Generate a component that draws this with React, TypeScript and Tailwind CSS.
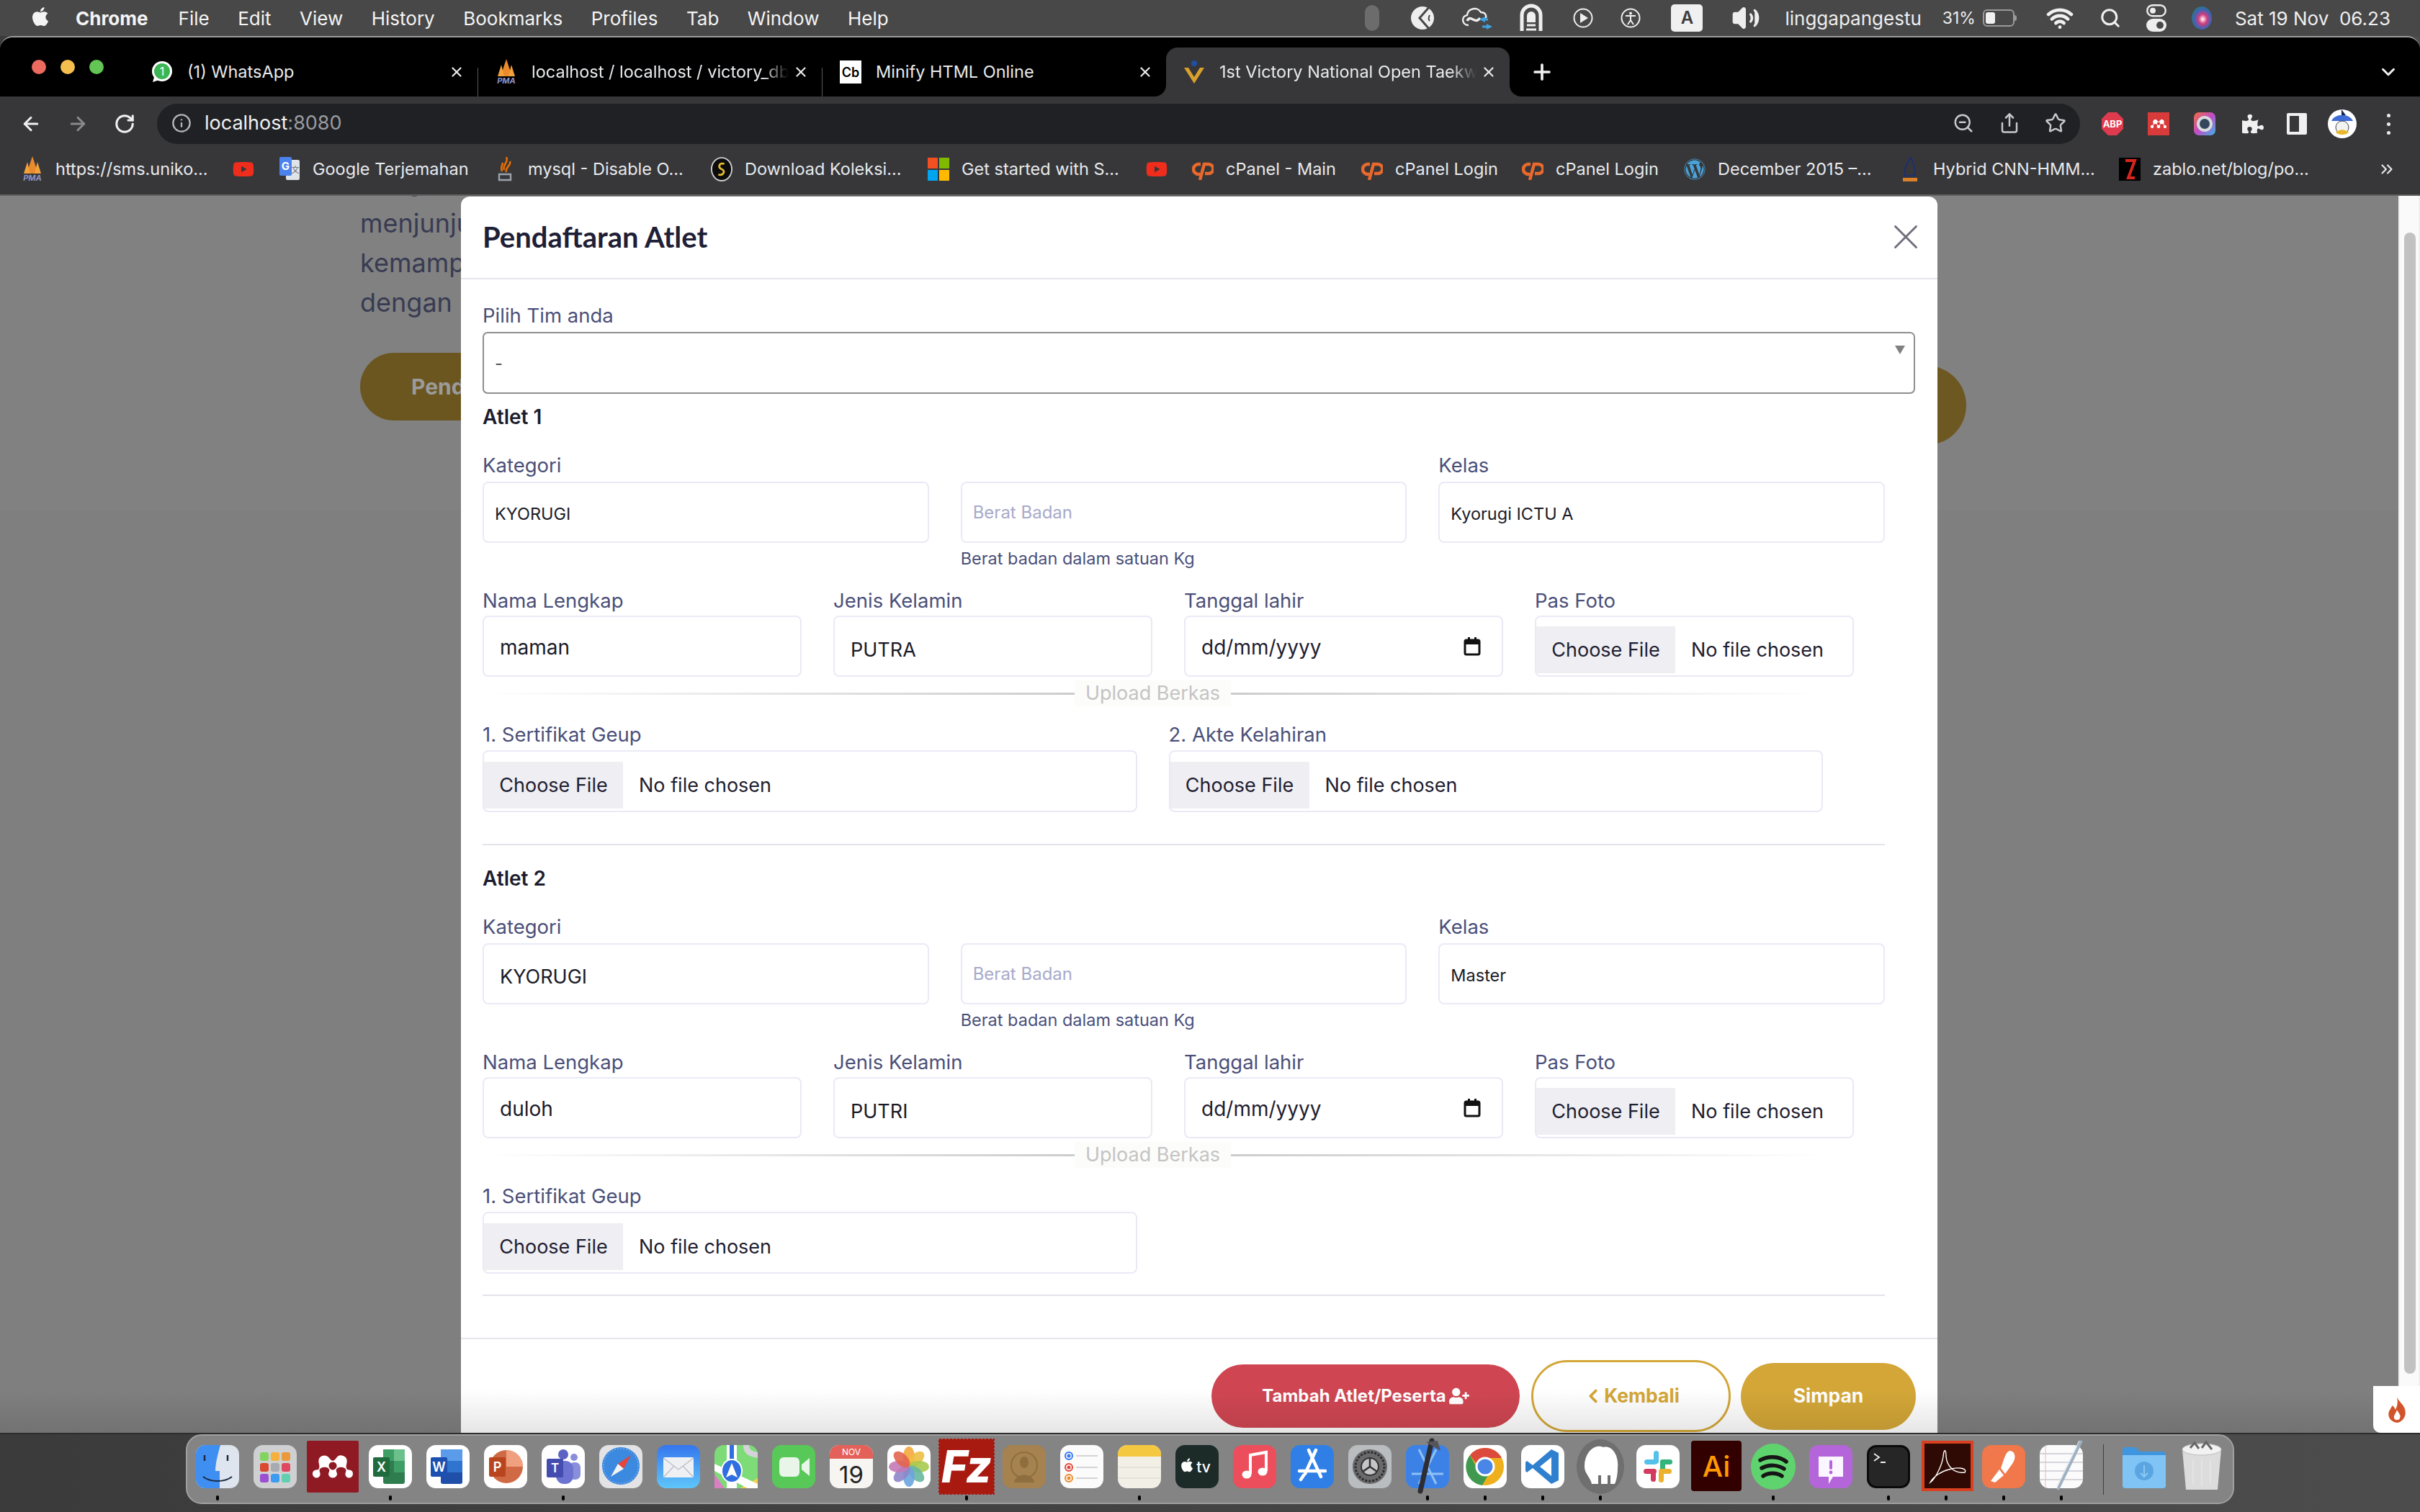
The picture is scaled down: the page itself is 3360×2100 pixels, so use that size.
import React from 'react';
import {
  ArrowLeft, ArrowRight, RotateCw, Info, ZoomOut, Share, Star, X, Plus, ChevronDown, ChevronLeft,
  Search, Wifi, Volume2, ChevronsRight,
} from 'lucide-react';
import { FaApple, FaUserPlus, FaPuzzlePiece, FaYoutube, FaWordpress } from 'react-icons/fa';
import { SiMendeley } from 'react-icons/si';

const menuItems = ['File', 'Edit', 'View', 'History', 'Bookmarks', 'Profiles', 'Tab', 'Window', 'Help'];

function PmaIcon() {
  return (
    <svg width="32" height="36" viewBox="0 0 30 36">
      <path d="M15 0 L23 24 H7 Z" fill="#e98a2c" />
      <path d="M8 8 L3 24 H12 Z" fill="#f3a23b" />
      <path d="M22 8 L27 24 H18 Z" fill="#f3a23b" />
      <text x="15" y="34" textAnchor="middle" fontSize="11" fontStyle="italic" fontWeight="700" fill="#8d93c9" fontFamily="Inter, sans-serif">PMA</text>
    </svg>
  );
}

function VictoryIcon() {
  return (
    <svg width="30" height="34" viewBox="0 0 30 34">
      <circle cx="15" cy="5" r="4" fill="#1f4fa3" />
      <path d="M1 11 L15 33 L29 11 L23 11 L15 24 L7 11 Z" fill="#d9a12c" />
    </svg>
  );
}

function Tab({ icon, title, active, fade }: { icon: React.ReactNode; title: string; active?: boolean; fade?: boolean }) {
  return (
    <div className={`relative flex h-[68px] w-[477px] shrink-0 items-center gap-[20px] pl-[24px] pr-[18px] ${active ? 'rounded-t-[16px] bg-[#37373a]' : ''}`}>
      {active && (
        <>
          <div className="absolute bottom-0 left-[-16px] h-[16px] w-[16px] bg-[#37373a]">
            <div className="h-full w-full rounded-br-[16px] bg-black" />
          </div>
          <div className="absolute bottom-0 right-[-16px] h-[16px] w-[16px] bg-[#37373a]">
            <div className="h-full w-full rounded-bl-[16px] bg-black" />
          </div>
        </>
      )}
      <div className="flex w-[30px] shrink-0 justify-center">{icon}</div>
      <div className={`min-w-0 flex-1 overflow-hidden whitespace-nowrap text-[23.5px] text-[#e8eaed] ${fade ? '[mask-image:linear-gradient(to_right,black_90%,transparent)]' : ''}`}>
        {title}
      </div>
      <X size={22} strokeWidth={2.4} className="ml-[-14px] shrink-0 text-[#e8eaed]" />
    </div>
  );
}

function TabSep() {
  return <div className="mt-[15px] h-[40px] w-[1px] shrink-0 bg-[#5a5a5e]" />;
}

function YtIcon() {
  return <FaYoutube size={32} className="text-[#ee2d1d]" />;
}

function CpIcon() {
  return (
    <svg width="30" height="30" viewBox="0 0 30 30">
      <path d="M12 8 H9 A7 7 0 0 0 9 22 H11" fill="none" stroke="#e9692c" strokeWidth="4.5" />
      <path d="M11 30 L17 8 H23 A6.5 6.5 0 0 1 23 21 H18" fill="none" stroke="#e9692c" strokeWidth="4.5" />
    </svg>
  );
}

const bookmarks: { icon: React.ReactNode; label?: string; w?: string }[] = [
  { icon: <PmaIcon />, label: 'https://sms.uniko...', w: 'w-[212px]' },
  { icon: <YtIcon /> },
  {
    icon: (
      <svg width="30" height="34" viewBox="0 0 30 34">
        <rect x="10" y="4" width="19" height="28" rx="2" fill="#dfe3ea" />
        <rect x="1" y="0" width="17" height="26" rx="2" fill="#4a82ee" />
        <text x="9.5" y="18" textAnchor="middle" fontSize="15" fontWeight="700" fill="#fff" fontFamily="Inter, sans-serif">G</text>
        <text x="23" y="22" textAnchor="middle" fontSize="11" fill="#666" fontFamily="Noto Sans CJK SC, sans-serif">文</text>
      </svg>
    ),
    label: 'Google Terjemahan',
    w: 'w-[218px]',
  },
  {
    icon: (
      <svg width="24" height="34" viewBox="0 0 24 34">
        <path d="M14 0 C18 8 8 10 11 18 M19 6 C21 12 12 14 14 21 M9 8 C8 13 6 14 8 20" fill="none" stroke="#e76f00" strokeWidth="2.6" />
        <path d="M4 24 H20 V32 H4 Z" fill="none" stroke="#9aa3ad" strokeWidth="2.4" />
      </svg>
    ),
    label: 'mysql - Disable O...',
    w: 'w-[220px]',
  },
  {
    icon: (
      <svg width="32" height="36" viewBox="0 0 32 36">
        <ellipse cx="16" cy="18" rx="15" ry="17" fill="#0c0c0c" stroke="#cfcfcf" strokeWidth="2" />
        <path d="M20 10 C12 8 10 15 16 18 C22 20 19 28 11 26" fill="none" stroke="#e5bb2f" strokeWidth="3" />
      </svg>
    ),
    label: 'Download Koleksi...',
    w: 'w-[220px]',
  },
  {
    icon: (
      <svg width="30" height="32" viewBox="0 0 30 32">
        <rect width="14" height="15" fill="#f25022" />
        <rect x="16" width="14" height="15" fill="#7fba00" />
        <rect y="17" width="14" height="15" fill="#00a4ef" />
        <rect x="16" y="17" width="14" height="15" fill="#ffb900" />
      </svg>
    ),
    label: 'Get started with S...',
    w: 'w-[222px]',
  },
  { icon: <YtIcon /> },
  { icon: <CpIcon />, label: 'cPanel - Main', w: 'w-[154px]' },
  { icon: <CpIcon />, label: 'cPanel Login', w: 'w-[142px]' },
  { icon: <CpIcon />, label: 'cPanel Login', w: 'w-[144px]' },
  { icon: <FaWordpress size={32} className="text-[#4aa3d8]" />, label: 'December 2015 –...', w: 'w-[218px]' },
  {
    icon: (
      <svg width="30" height="34" viewBox="0 0 30 34">
        <path d="M8 26 C6 14 12 8 16 0 C20 8 22 18 22 26 Z" fill="none" stroke="#1d2f6f" strokeWidth="2" />
        <rect x="5" y="29" width="20" height="5" fill="#d9822b" />
      </svg>
    ),
    label: 'Hybrid CNN-HMM...',
    w: 'w-[224px]',
  },
  {
    icon: (
      <svg width="30" height="32" viewBox="0 0 30 32">
        <rect width="30" height="32" fill="#000" />
        <path d="M9 4 H22 L13 28 H22" fill="none" stroke="#d8261c" strokeWidth="4" />
      </svg>
    ),
    label: 'zablo.net/blog/po...',
    w: 'w-[215px]',
  },
];

function Label({ children }: { children: React.ReactNode }) {
  return <div className="h-[36px] text-[27.5px] leading-[36px] text-[#4b5079]">{children}</div>;
}

function Field({ children, h, extra }: { children?: React.ReactNode; h: string; extra?: string }) {
  return (
    <div className={`flex items-center rounded-[8px] border-2 border-[#e9eaf6] bg-white ${h} ${extra ?? ''}`}>
      {children}
    </div>
  );
}

function FileField({ h }: { h: string }) {
  return (
    <div className={`flex items-end rounded-[8px] border-2 border-[#e9eaf6] bg-white pb-[3px] ${h}`}>
      <div className="flex h-[65px] w-[193px] shrink-0 items-center justify-center bg-[#eeeef3] pt-[2px] text-[27px] text-[#1f2030]">Choose File</div>
      <div className="flex h-[65px] items-center pl-[22px] pt-[2px] text-[27px] text-[#1f2030]">No file chosen</div>
    </div>
  );
}

function UploadDivider() {
  return (
    <div className="flex h-[36px] w-[1861px] items-center">
      <div className="h-[3px] flex-1 bg-gradient-to-r from-white to-[#cccccc]" />
      <div className="bg-[#fcfcfa] px-[15px] text-[27px] leading-[36px] text-[#c4c4c4]">Upload Berkas</div>
      <div className="h-[3px] flex-1 bg-gradient-to-r from-[#cccccc] to-white" />
    </div>
  );
}

function DateField() {
  return (
    <Field h="h-[85px]" extra="justify-between pl-[22px] pr-[29px]">
      <span className="pt-[2px] text-[28px] text-[#1f2030]">dd/mm/yyyy</span>
      <svg width="24" height="26" viewBox="0 0 24 26">
        <rect x="2" y="4" width="20" height="20" rx="2" fill="none" stroke="#111" strokeWidth="3" />
        <rect x="2" y="4" width="20" height="6" fill="#111" />
        <rect x="6" y="0" width="3" height="5" fill="#111" />
        <rect x="15" y="0" width="3" height="5" fill="#111" />
      </svg>
    </Field>
  );
}

function Athlete(p: {
  title: string; kategoriClass: string; kelas: string; nama: string; gender: string;
  second?: boolean; closeGap: string;
}) {
  return (
    <div>
      <div className="h-[36px] text-[28px] font-semibold leading-[36px] text-[#1c1d2e]">{p.title}</div>

      <div className="mt-[31px] grid w-[1947px] grid-cols-3 gap-x-[44px]">
        <div>
          <Label>Kategori</Label>
          <div className="mt-[5px]">
            <Field h="h-[85px]" extra={p.kategoriClass}>KYORUGI</Field>
          </div>
        </div>
        <div>
          <div className="h-[41px]" />
          <Field h="h-[85px]" extra="pl-[15px] text-[24px] text-[#a8aac9]">Berat Badan</Field>
          <div className="mt-[7px] h-[30px] text-[23.5px] leading-[30px] text-[#4b5079]">Berat badan dalam satuan Kg</div>
        </div>
        <div>
          <Label>Kelas</Label>
          <div className="mt-[5px]">
            <Field h="h-[85px]" extra="pl-[15px] pt-[4px] text-[23.5px] text-[#1a1b28]">{p.kelas}</Field>
          </div>
        </div>
      </div>

      <div className="mt-[25px] grid w-[1904px] grid-cols-4 gap-x-[44px]">
        <div>
          <Label>Nama Lengkap</Label>
          <div className="mt-[3px]">
            <Field h="h-[85px]" extra="pl-[22px] pt-[2px] text-[28px] text-[#1a1b28]">{p.nama}</Field>
          </div>
        </div>
        <div>
          <Label>Jenis Kelamin</Label>
          <div className="mt-[3px]">
            <Field h="h-[85px]" extra="pl-[22px] pt-[11px] text-[27px] text-[#1a1b28]">{p.gender}</Field>
          </div>
        </div>
        <div>
          <Label>Tanggal lahir</Label>
          <div className="mt-[3px]">
            <DateField />
          </div>
        </div>
        <div>
          <Label>Pas Foto</Label>
          <div className="mt-[3px]">
            <FileField h="h-[85px]" />
          </div>
        </div>
      </div>

      <div className="mt-[5px]">
        <UploadDivider />
      </div>

      <div className="mt-[21px] grid w-[1861px] grid-cols-2 gap-x-[44px]">
        <div>
          <Label>1. Sertifikat Geup</Label>
          <div className="mt-[4px]">
            <FileField h="h-[86px]" />
          </div>
        </div>
        {!p.second && (
          <div>
            <Label>2. Akte Kelahiran</Label>
            <div className="mt-[4px]">
              <FileField h="h-[86px]" />
            </div>
          </div>
        )}
      </div>

      <div className={`${p.closeGap} h-[2px] w-[1947px] bg-[#e3e3ea]`} />
    </div>
  );
}

function Tile({ bg, children }: { bg: string; children?: React.ReactNode }) {
  return (
    <>
      <rect width="60" height="60" rx="13" fill={bg} />
      {children}
    </>
  );
}

const dockIcons: { name: string; dot?: boolean; art: React.ReactNode }[] = [
  {
    name: 'finder',
    dot: true,
    art: (
      <>
        <rect width="60" height="60" rx="13" fill="#dfe5ee" />
        <path d="M13 0 H34 C30 14 27 26 27 36 H33 V60 H13 A13 13 0 0 1 0 47 V13 A13 13 0 0 1 13 0 Z" fill="#3f8ef2" />
        <path d="M12 14 V22 M44 14 V22" stroke="#1b2a44" strokeWidth="2.5" />
        <path d="M10 44 C20 52 40 52 50 44" fill="none" stroke="#1b2a44" strokeWidth="2" />
      </>
    ),
  },
  {
    name: 'launchpad',
    art: (
      <Tile bg="#cfd0d2">
        <rect x="9" y="10" width="12" height="12" rx="3" fill="#82d35f" />
        <rect x="24" y="10" width="12" height="12" rx="3" fill="#f5b13c" />
        <rect x="39" y="10" width="12" height="12" rx="3" fill="#ea9a3c" />
        <rect x="9" y="25" width="12" height="12" rx="3" fill="#d9492f" />
        <rect x="24" y="25" width="12" height="12" rx="3" fill="#a7abb0" />
        <rect x="39" y="25" width="12" height="12" rx="3" fill="#e0485f" />
        <rect x="9" y="40" width="12" height="12" rx="3" fill="#9b4fd1" />
        <rect x="24" y="40" width="12" height="12" rx="3" fill="#3b9cf0" />
        <rect x="39" y="40" width="12" height="12" rx="3" fill="#62d0b0" />
      </Tile>
    ),
  },
  {
    name: 'mendeley',
    art: (
      <>
        <rect x="-6" y="-6" width="72" height="72" rx="2" fill="#8f1a24" />
        <SiMendeley x={2} y={2} size={56} color="#ffffff" />
      </>
    ),
  },
  {
    name: 'excel',
    dot: true,
    art: (
      <Tile bg="#ffffff">
        <rect x="20" y="6" width="30" height="48" rx="3" fill="#2f7d4f" />
        <rect x="35" y="6" width="15" height="16" fill="#6cc08c" />
        <rect x="20" y="6" width="15" height="16" fill="#3f9e66" />
        <rect x="35" y="22" width="15" height="16" fill="#3f9e66" />
        <rect x="6" y="17" width="23" height="27" rx="2" fill="#1f6b3d" />
        <text x="17.5" y="37" textAnchor="middle" fontSize="18" fontWeight="600" fill="#fff" fontFamily="Inter, sans-serif">X</text>
      </Tile>
    ),
  },
  {
    name: 'word',
    art: (
      <Tile bg="#ffffff">
        <rect x="20" y="6" width="30" height="48" rx="3" fill="#1f4fa8" />
        <rect x="20" y="6" width="30" height="16" fill="#5a9bea" />
        <rect x="20" y="22" width="30" height="16" fill="#2f74cf" />
        <rect x="6" y="17" width="23" height="27" rx="2" fill="#1d4fb0" />
        <text x="17.5" y="37" textAnchor="middle" fontSize="18" fontWeight="600" fill="#fff" fontFamily="Inter, sans-serif">W</text>
      </Tile>
    ),
  },
  {
    name: 'ppt',
    art: (
      <Tile bg="#ffffff">
        <circle cx="31" cy="30" r="23" fill="#cf6a45" />
        <path d="M31 7 A23 23 0 0 1 54 30 H31 Z" fill="#f0a07f" />
        <rect x="7" y="17" width="23" height="27" rx="2" fill="#b9451f" />
        <text x="18.5" y="37" textAnchor="middle" fontSize="18" fontWeight="600" fill="#fff" fontFamily="Inter, sans-serif">P</text>
      </Tile>
    ),
  },
  {
    name: 'teams',
    dot: true,
    art: (
      <Tile bg="#ffffff">
        <circle cx="30" cy="13" r="7" fill="#5c63c4" />
        <circle cx="45" cy="17" r="5" fill="#8a8fdc" />
        <rect x="38" y="24" width="16" height="24" rx="7" fill="#8a8fdc" />
        <rect x="20" y="22" width="24" height="32" rx="11" fill="#6c73d0" />
        <rect x="7" y="19" width="23" height="26" rx="2" fill="#444cb0" />
        <text x="18.5" y="38" textAnchor="middle" fontSize="17" fontWeight="600" fill="#fff" fontFamily="Inter, sans-serif">T</text>
      </Tile>
    ),
  },
  {
    name: 'safari',
    art: (
      <Tile bg="#e3e3e5">
        <circle cx="30" cy="29" r="26" fill="#3c89e0" />
        <circle cx="30" cy="29" r="24" fill="none" stroke="#d9e9fb" strokeWidth="1" strokeDasharray="1 3" />
        <path d="M44 14 L26 26 L34 33 Z" fill="#e8443a" />
        <path d="M16 44 L26 26 L34 33 Z" fill="#f3f3f3" />
      </Tile>
    ),
  },
  {
    name: 'mail',
    art: (
      <>
        <defs>
          <linearGradient id="mailbg" x1="0" y1="0" x2="0" y2="1">
            <stop offset="0" stopColor="#3576ee" />
            <stop offset="1" stopColor="#5fc6fa" />
          </linearGradient>
        </defs>
        <Tile bg="url(#mailbg)">
          <rect x="9" y="17" width="42" height="28" rx="2" fill="#eef0f3" />
          <path d="M9 18 L30 34 L51 18 M9 45 L24 29 M51 45 L36 29" fill="none" stroke="#b8bcc4" strokeWidth="1.2" />
        </Tile>
      </>
    ),
  },
  {
    name: 'maps',
    art: (
      <Tile bg="#7ddb78">
        <path d="M0 40 L14 60 H0 Z" fill="#d97fc2" />
        <path d="M36 60 L60 46 V60 Z" fill="#f6d24c" />
        <path d="M40 0 C40 14 50 16 60 18 V10 C52 9 48 6 48 0 Z" fill="#d4d4d8" />
        <path d="M0 26 L60 54 V60 H46 L0 36 Z" fill="#ffffff" />
        <rect x="17" y="0" width="14" height="60" fill="#ffffff" />
        <rect x="21" y="0" width="6" height="30" fill="#2f6fe0" />
        <ellipse cx="24" cy="36" rx="14" ry="16" fill="#2f6fe0" stroke="#fff" strokeWidth="2" />
        <path d="M24 25 L32 45 L24 41 L16 45 Z" fill="#fff" />
      </Tile>
    ),
  },
  {
    name: 'facetime',
    art: (
      <Tile bg="#58c958">
        <rect x="10" y="17" width="28" height="27" rx="6" fill="#e8f5e8" />
        <path d="M41 27 L52 18 V43 L41 34 Z" fill="#e8f5e8" />
      </Tile>
    ),
  },
  {
    name: 'calendar',
    art: (
      <Tile bg="#f6f5f2">
        <path d="M13 0 H47 A13 13 0 0 1 60 13 V19 H0 V13 A13 13 0 0 1 13 0 Z" fill="#e4615a" />
        <text x="30" y="14" textAnchor="middle" fontSize="12" fill="#fff" fontFamily="Inter, sans-serif">NOV</text>
        <text x="30" y="53" textAnchor="middle" fontSize="33" fill="#222" fontFamily="Inter, sans-serif">19</text>
      </Tile>
    ),
  },
  {
    name: 'photos',
    art: (
      <Tile bg="#ffffff">
        {[
          ['#f5a83c', 0], ['#ecc043', 45], ['#a8c94f', 90], ['#69b8a0', 135],
          ['#6ba4de', 180], ['#8d86c9', 225], ['#c47ab6', 270], ['#e2654f', 315],
        ].map(([c, r]) => (
          <ellipse key={String(r)} cx="30" cy="16" rx="8" ry="14" fill={String(c)} opacity="0.9" transform={`rotate(${r} 30 30)`} />
        ))}
      </Tile>
    ),
  },
  {
    name: 'filezilla',
    dot: true,
    art: (
      <>
        <rect x="-8" y="-8" width="76" height="76" fill="#a81a10" stroke="#a81a10" strokeWidth="2" strokeDasharray="3 2" />
        <text x="30" y="52" textAnchor="middle" fontSize="62" fontWeight="800" fontStyle="italic" fill="#fff" fontFamily="Inter, sans-serif">Fz</text>
      </>
    ),
  },
  {
    name: 'contacts',
    art: (
      <Tile bg="#a5824f">
        <circle cx="30" cy="28" r="18" fill="none" stroke="#8e6e3f" strokeWidth="2" />
        <ellipse cx="30" cy="24" rx="6" ry="8" fill="#8e6e3f" />
        <path d="M16 52 C18 38 42 38 44 52 Z" fill="#8e6e3f" />
      </Tile>
    ),
  },
  {
    name: 'reminders',
    art: (
      <Tile bg="#fbfbfb">
        <circle cx="12" cy="15" r="5" fill="none" stroke="#3478f6" strokeWidth="2" />
        <circle cx="12" cy="15" r="2.5" fill="#3478f6" />
        <circle cx="12" cy="31" r="5" fill="none" stroke="#e2483c" strokeWidth="2" />
        <circle cx="12" cy="31" r="2.5" fill="#e2483c" />
        <circle cx="12" cy="46" r="5" fill="none" stroke="#ee8a2b" strokeWidth="2" />
        <circle cx="12" cy="46" r="2.5" fill="#ee8a2b" />
        <path d="M22 15 H52 M22 31 H52 M22 46 H52" stroke="#c8c8cc" strokeWidth="1.6" />
      </Tile>
    ),
  },
  {
    name: 'notes',
    dot: true,
    art: (
      <Tile bg="#f1efe6">
        <path d="M13 0 H47 A13 13 0 0 1 60 13 V16 H0 V13 A13 13 0 0 1 13 0 Z" fill="#f5c842" />
        <path d="M0 31 H60 M0 46 H60" stroke="#d9d7cd" strokeWidth="1" />
      </Tile>
    ),
  },
  {
    name: 'tv',
    art: (
      <Tile bg="#1c2a28">
        <g transform="translate(8 17) scale(0.042)" fill="#fff">
          <path d="M318.7 268.7c-.2-36.7 16.4-64.4 50-84.8-18.8-26.9-47.2-41.7-84.7-44.6-35.5-2.8-74.3 20.7-88.5 20.7-15 0-49.4-19.7-76.4-19.7C63.3 141.2 4 184.8 4 273.5q0 39.3 14.4 81.2c12.8 36.7 59 126.7 107.2 125.2 25.2-.6 43-17.9 75.8-17.9 31.8 0 48.3 17.9 76.4 17.9 48.6-.7 90.4-82.5 102.6-119.3-65.2-30.7-61.7-90-61.7-91.9zm-56.6-164.2c27.3-32.4 24.8-61.9 24-72.5-24.1 1.4-52 16.4-67.9 34.9-17.5 19.8-27.8 44.3-25.6 71.9 26.1 2 49.9-11.4 69.5-34.3z" />
        </g>
        <text x="39" y="38" textAnchor="middle" fontSize="21" fontWeight="500" fill="#fff" fontFamily="Inter, sans-serif">tv</text>
      </Tile>
    ),
  },
  {
    name: 'music',
    art: (
      <Tile bg="#ec4e5c">
        <path d="M24 40 V14 L46 10 V36" fill="none" stroke="#fff" strokeWidth="4" />
        <ellipse cx="19" cy="41" rx="6.5" ry="5.5" fill="#fff" />
        <ellipse cx="41" cy="37" rx="6.5" ry="5.5" fill="#fff" />
      </Tile>
    ),
  },
  {
    name: 'appstore',
    art: (
      <Tile bg="#2f7fe6">
        <path d="M35 7 L20 40 M25 7 L42 44 M12 36 H48 M14 48 L18 42" fill="none" stroke="#fff" strokeWidth="4.5" strokeLinecap="round" />
      </Tile>
    ),
  },
  {
    name: 'settings',
    art: (
      <Tile bg="#b9bdbf">
        <circle cx="30" cy="30" r="24" fill="#6a6a6c" />
        <circle cx="30" cy="30" r="20" fill="none" stroke="#2d2d2f" strokeWidth="3" strokeDasharray="3 2" />
        <circle cx="30" cy="30" r="12" fill="#c5c5c7" stroke="#333" strokeWidth="2" />
        <path d="M30 18 V30 L20 37 M30 30 L40 37" stroke="#333" strokeWidth="2.5" fill="none" />
      </Tile>
    ),
  },
  {
    name: 'xcode',
    dot: true,
    art: (
      <>
        <Tile bg="#3c82e6">
          <path d="M18 6 L42 54 M42 6 L18 54 M8 40 H52" stroke="#8fc0f5" strokeWidth="3" fill="none" />
        </Tile>
        <path d="M36 -6 L20 64" stroke="#2d2d33" strokeWidth="7" strokeLinecap="round" />
        <path d="M28 -4 L44 -6 L48 8 L38 2 Z" fill="#55555c" />
      </>
    ),
  },
  {
    name: 'chrome',
    dot: true,
    art: (
      <Tile bg="#ffffff">
        <circle cx="30" cy="30" r="26" fill="#eeb11d" />
        <path d="M30 4 A26 26 0 0 1 53 18 H30 A12 12 0 0 0 18 26 L9 14 A26 26 0 0 1 30 4 Z" fill="#db4a3b" />
        <path d="M9 14 L22 38 A13 13 0 0 0 34 42 L26 56 A26 26 0 0 1 9 14 Z" fill="#3f9a4f" />
        <circle cx="30" cy="30" r="12" fill="#4a86e8" stroke="#fff" strokeWidth="3" />
      </Tile>
    ),
  },
  {
    name: 'vscode',
    dot: true,
    art: (
      <Tile bg="#ffffff">
        <path d="M42 6 L52 11 V49 L42 54 L16 32 L8 38 L6 36 V24 L8 22 L16 28 Z" fill="#2f80cf" />
        <path d="M42 17 V43 L26 30 Z" fill="#ffffff" />
      </Tile>
    ),
  },
  {
    name: 'elephant',
    dot: true,
    art: (
      <>
        <ellipse cx="30" cy="30" rx="33" ry="38" fill="#6f6f6f" />
        <path d="M8 30 C8 10 22 -2 34 3 C46 0 56 14 54 32 C54 42 52 50 50 54 H44 V42 H40 V54 H31 V42 H27 V54 H18 C16 44 8 40 8 30 Z" fill="#ffffff" />
      </>
    ),
  },
  {
    name: 'slack',
    art: (
      <Tile bg="#ffffff">
        <rect x="24" y="8" width="7" height="18" rx="3.5" fill="#54c1e9" />
        <rect x="11" y="20" width="18" height="7" rx="3.5" fill="#54c1e9" />
        <rect x="33" y="20" width="7" height="18" rx="3.5" fill="#32b47a" />
        <rect x="33" y="20" width="17" height="7" rx="3.5" fill="#32b47a" />
        <rect x="31" y="33" width="18" height="7" rx="3.5" fill="#ecb22e" />
        <rect x="31" y="35" width="7" height="17" rx="3.5" fill="#ecb22e" />
        <rect x="20" y="33" width="7" height="18" rx="3.5" fill="#d23a60" />
        <rect x="10" y="33" width="18" height="7" rx="3.5" fill="#d23a60" />
      </Tile>
    ),
  },
  {
    name: 'illustrator',
    art: (
      <>
        <rect x="-4" y="-6" width="70" height="70" rx="4" fill="#330000" />
        <text x="31" y="44" textAnchor="middle" fontSize="40" fontWeight="500" fill="#ff9a00" fontFamily="Inter, sans-serif">Ai</text>
      </>
    ),
  },
  {
    name: 'spotify',
    dot: true,
    art: (
      <>
        <ellipse cx="30" cy="30" rx="31" ry="32" fill="#5fd46e" />
        <path d="M12 21 C22 15 38 15 48 23 M14 32 C24 27 36 27 45 33 M16 43 C24 38 34 38 42 43" fill="none" stroke="#161616" strokeWidth="5.5" strokeLinecap="round" />
      </>
    ),
  },
  {
    name: 'feedback',
    art: (
      <Tile bg="#b465da">
        <path d="M13 16 H47 V44 H33 L27 54 V44 H13 Z" fill="#fbf6ff" />
        <rect x="28" y="21" width="4" height="13" rx="2" fill="#b465da" />
        <circle cx="30" cy="38" r="2.4" fill="#b465da" />
      </Tile>
    ),
  },
  {
    name: 'terminal',
    dot: true,
    art: (
      <>
        <Tile bg="#0a0a0a">
          <rect x="3" y="3" width="54" height="54" rx="10" fill="#262626" />
        </Tile>
        <path d="M10 12 L17 17 L10 22" fill="none" stroke="#eee" strokeWidth="1.8" />
        <path d="M19 24 H26" stroke="#eee" strokeWidth="2" />
      </>
    ),
  },
  {
    name: 'acrobat',
    dot: true,
    art: (
      <>
        <rect x="-4" y="-6" width="72" height="70" fill="#d8401f" />
        <rect x="0" y="-2" width="64" height="62" fill="#2f0a04" />
        <path d="M8 52 C14 48 24 30 26 16 C27 4 30 6 30 16 C31 30 42 40 56 38 C60 32 46 30 34 34 C24 36 12 44 8 52 Z" fill="none" stroke="#fff" strokeWidth="1.4" />
      </>
    ),
  },
  {
    name: 'postman',
    dot: true,
    art: (
      <Tile bg="#f0784a">
        <path d="M38 8 C46 8 48 18 42 26 L32 40 L26 32 C30 22 32 10 38 8 Z M24 34 L30 42 L18 52 L12 50 Z" fill="#fff" />
      </Tile>
    ),
  },
  {
    name: 'textedit',
    dot: true,
    art: (
      <>
        <Tile bg="#fbfbfb">
          <path d="M0 12 H60 M0 24 H60 M0 36 H60 M0 48 H60" stroke="#c9c9d3" strokeWidth="1.4" />
          <path d="M8 0 V60" stroke="#f0b8b8" strokeWidth="1" />
        </Tile>
        <path d="M58 -6 L25 62" stroke="#9fb0c0" strokeWidth="4" />
        <path d="M55 -6 L24 58" stroke="#dde5ec" strokeWidth="1.2" />
      </>
    ),
  },
];

function DockIcon({ art, dot }: { art: React.ReactNode; dot?: boolean }) {
  return (
    <div className="relative h-[60px] w-[60px] shrink-0">
      <svg width="60" height="60" viewBox="0 0 60 60" className="overflow-visible">
        {art}
      </svg>
      {dot && <div className="absolute bottom-[-17px] left-[28px] h-[7px] w-[4px] rounded-full bg-black" />}
    </div>
  );
}

export default function App() {
  return (
    <div className="flex h-[2100px] w-[3360px] flex-col overflow-hidden bg-gradient-to-r from-[#3b3b3b] to-[#4c4c4c] font-['Inter',sans-serif]">
      {/* mac menu bar */}
      <div className="flex h-[50px] shrink-0 items-center bg-[#484848] pl-[41px] pr-[41px] text-[26px] text-[#f4f4f4]">
        <FaApple size={30} className="mb-[4px] text-[#f4f4f4]" />
        <span className="ml-[34px] font-bold">Chrome</span>
        <div className="ml-[42px] flex gap-[39.5px]">
          {menuItems.map(m => <span key={m}>{m}</span>)}
        </div>
        <div className="flex-1" />
        <div className="h-[36px] w-[20px] rounded-full bg-[#6c6c6c]" />
        <svg width="32" height="36" viewBox="0 0 32 36" className="ml-[44px]">
          <circle cx="16" cy="18" r="16" fill="#eee" />
          <path d="M26 2 L12 18 L26 34" fill="none" stroke="#484848" strokeWidth="3" />
          <path d="M26 14 C24 18 24 20 26 22" fill="none" stroke="#484848" strokeWidth="2" />
        </svg>
        <svg width="46" height="36" viewBox="0 0 46 36" className="ml-[37px]">
          <path d="M11 28 C2 28 0 16 9 14 C10 4 24 2 28 10 C34 10 36 14 35 18" fill="none" stroke="#eee" strokeWidth="2.4" />
          <path d="M9 22 C14 12 20 28 27 18" fill="none" stroke="#eee" strokeWidth="3.4" />
          <path d="M34 16 L26 20 L34 24 Z M36 26 L44 30 L36 34 Z" fill="#3ea3e0" />
          <path d="M32 20 H38 M30 30 H38" stroke="#3ea3e0" strokeWidth="3" />
        </svg>
        <svg width="32" height="40" viewBox="0 0 32 40" className="ml-[36px]">
          <path d="M3 38 V16 A13 13 0 0 1 29 16 V38" fill="none" stroke="#eee" strokeWidth="5" />
          <path d="M10 26 V17 A6 6 0 0 1 22 17 V26 Z" fill="#eee" />
          <path d="M10 30 H22 M9 36 H23" stroke="#eee" strokeWidth="3" />
        </svg>
        <svg width="28" height="28" viewBox="0 0 28 28" className="ml-[42px]">
          <circle cx="14" cy="14" r="12.5" fill="none" stroke="#eee" strokeWidth="2" />
          <path d="M10 7 L21 14 L10 21 Z" fill="#eee" />
        </svg>
        <svg width="28" height="28" viewBox="0 0 28 28" className="ml-[38px]">
          <circle cx="14" cy="14" r="12.5" fill="none" stroke="#eee" strokeWidth="2" />
          <circle cx="14" cy="7.5" r="2" fill="#eee" />
          <path d="M7 11 H21 M14 11 V17 L10 23 M14 17 L18 23" fill="none" stroke="#eee" strokeWidth="2" />
        </svg>
        <div className="ml-[42px] flex h-[38px] w-[44px] items-center justify-center rounded-[5px] bg-[#f0f0f0] text-[24px] font-semibold text-[#3c3c3c]">A</div>
        <Volume2 size={40} strokeWidth={2} fill="#eee" className="ml-[40px] text-[#eee]" />
        <span className="ml-[34px] text-[#eeeeee]">linggapangestu</span>
        <span className="ml-[29px] text-[23px] text-[#eeeeee]">31%</span>
        <div className="ml-[10px] flex h-[24px] w-[44px] items-center rounded-[6px] border-2 border-[#9a9a9a] p-[2px]">
          <div className="h-full w-[13px] rounded-[3px] bg-[#f0f0f0]" />
        </div>
        <div className="h-[8px] w-[3px] rounded-r-full bg-[#9a9a9a]" />
        <Wifi size={38} strokeWidth={3} className="ml-[41px] text-[#f0f0f0]" />
        <Search size={30} strokeWidth={2.4} className="ml-[36px] text-[#f0f0f0]" />
        <svg width="28" height="38" viewBox="0 0 28 38" className="ml-[35px]">
          <rect x="1.2" y="1.2" width="25.6" height="15" rx="7.5" fill="none" stroke="#eee" strokeWidth="2.4" />
          <circle cx="9" cy="8.7" r="4" fill="#eee" />
          <rect y="20" width="28" height="18" rx="9" fill="#eee" />
          <circle cx="19" cy="29" r="5" fill="#484848" />
        </svg>
        <svg width="30" height="34" viewBox="0 0 30 34" className="ml-[34px]">
          <defs>
            <radialGradient id="siri" cx="0.55" cy="0.55" r="0.6">
              <stop offset="0" stopColor="#ffffff" />
              <stop offset="0.35" stopColor="#d23c7c" />
              <stop offset="0.7" stopColor="#3a64b8" />
              <stop offset="1" stopColor="#2a7a70" />
            </radialGradient>
          </defs>
          <ellipse cx="15" cy="17" rx="14" ry="16" fill="url(#siri)" />
        </svg>
        <span className="ml-[31px] whitespace-pre text-[26px] text-[#f0f0f0]">Sat 19 Nov  06.23</span>
      </div>

      {/* chrome window */}
      <div className="flex min-h-0 flex-1 flex-col overflow-hidden rounded-t-[18px] border-t-2 border-[#9c9c9c] bg-[#37373a]">
        {/* tab strip */}
        <div className="relative flex h-[82px] shrink-0 items-end bg-black pl-[186px]">
          <div className="absolute left-[44px] top-[31px] flex gap-[20px]">
            <div className="h-[20px] w-[20px] rounded-full bg-[#ed6a5e]" />
            <div className="h-[20px] w-[20px] rounded-full bg-[#f5bf4f]" />
            <div className="h-[20px] w-[20px] rounded-full bg-[#62c554]" />
          </div>
          <Tab
            title="(1) WhatsApp"
            icon={
              <svg width="30" height="32" viewBox="0 0 30 32">
                <circle cx="15" cy="15" r="14" fill="#fff" />
                <path d="M2 30 L5 20 L11 27 Z" fill="#fff" />
                <circle cx="15" cy="15" r="11" fill="#3cb554" />
                <text x="15" y="21" textAnchor="middle" fontSize="16" fill="#fff" fontFamily="Inter, sans-serif">1</text>
              </svg>
            }
          />
          <TabSep />
          <Tab title="localhost / localhost / victory_db / information_schema" icon={<PmaIcon />} fade />
          <TabSep />
          <Tab
            title="Minify HTML Online"
            icon={
              <div className="flex h-[32px] w-[30px] items-center justify-center bg-white text-[18px] font-semibold text-black">Cb</div>
            }
          />
          <Tab title="1st Victory National Open Taekwondo" icon={<VictoryIcon />} active fade />
          <Plus size={34} strokeWidth={2.6} className="mb-[17px] ml-[28px] text-[#f0f0f0]" />
          <div className="flex-1" />
          <ChevronDown size={30} strokeWidth={2.4} className="mb-[19px] mr-[29px] text-[#f0f0f0]" />
        </div>

        {/* toolbar */}
        <div className="flex h-[76px] shrink-0 items-center pl-[28px] pr-[29px]">
          <div className="flex gap-[35px]">
            <ArrowLeft size={30} strokeWidth={2.4} className="text-[#f0f0f0]" />
            <ArrowRight size={30} strokeWidth={2.4} className="text-[#8a8a8a]" />
            <RotateCw size={30} strokeWidth={2.4} className="text-[#f0f0f0]" />
          </div>
          <div className="ml-[30px] flex h-[56px] flex-1 items-center rounded-full bg-[#202124] pb-[2px] pl-[20px] pr-[19px]">
            <Info size={28} strokeWidth={2} className="text-[#b4b6ba]" />
            <span className="ml-[18px] text-[27px] text-[#f0f0f0]">localhost<span className="text-[#9a9ca0]">:8080</span></span>
            <div className="flex-1" />
            <div className="flex gap-[34px] text-[#c6c8cc]">
              <ZoomOut size={30} strokeWidth={2} />
              <Share size={30} strokeWidth={2} />
              <Star size={30} strokeWidth={2} />
            </div>
          </div>
          <div className="ml-[30px] flex items-center gap-[34px]">
            <svg width="30" height="32" viewBox="0 0 30 32">
              <path d="M9 0 H21 L30 9 V23 L21 32 H9 L0 23 V9 Z" fill="#df3b4e" />
              <text x="15" y="21" textAnchor="middle" fontSize="13" fontWeight="700" fill="#fff" fontFamily="Inter, sans-serif">ABP</text>
            </svg>
            <div className="flex h-[32px] w-[30px] items-center justify-center bg-[#d93a3a]">
              <SiMendeley size={22} className="text-white" />
            </div>
            <svg width="30" height="32" viewBox="0 0 30 32">
              <defs>
                <linearGradient id="lens" x1="0" y1="0" x2="1" y2="1">
                  <stop offset="0" stopColor="#f26d3d" />
                  <stop offset="0.5" stopColor="#c24bc8" />
                  <stop offset="1" stopColor="#3bb6e8" />
                </linearGradient>
              </defs>
              <rect width="30" height="32" rx="7" fill="url(#lens)" />
              <circle cx="15" cy="16" r="11" fill="#d8dadd" />
              <circle cx="15" cy="16" r="7" fill="#34475c" />
            </svg>
            <FaPuzzlePiece size={30} className="ml-[3px] mr-[-2px] text-[#f0f0f0]" />
            <div className="flex h-[30px] w-[28px] justify-end rounded-[2px] border-[4px] border-[#f0f0f0]">
              <div className="h-full w-[7px] bg-[#f0f0f0]" />
            </div>
            <svg width="42" height="44" viewBox="0 0 42 44" className="mx-[-6px]">
              <circle cx="21" cy="22" r="20" fill="#ffffff" />
              <path d="M6 18 C10 8 30 6 36 18 Z" fill="#3f6bd6" />
              <path d="M20 2 L26 10 L20 10 Z" fill="#16244d" />
              <circle cx="21" cy="27" r="9" fill="#f2f2f2" stroke="#444" />
              <path d="M12 34 C18 29 24 29 30 34 C26 38 16 38 12 34 Z" fill="#e8b82c" />
            </svg>
            <div className="flex w-[30px] flex-col items-center gap-[7px]">
              <div className="h-[5px] w-[5px] rounded-full bg-[#e8eaed]" />
              <div className="h-[5px] w-[5px] rounded-full bg-[#e8eaed]" />
              <div className="h-[5px] w-[5px] rounded-full bg-[#e8eaed]" />
            </div>
          </div>
        </div>

        {/* bookmarks bar */}
        <div className="flex h-[60px] shrink-0 items-center gap-[34px] pb-[10px] pl-[30px] pr-[33px] text-[23.5px] text-[#e8eaed]">
          {bookmarks.map((b, i) => (
            <div key={i} className="flex items-center gap-[17px]">
              <div className="flex w-[30px] justify-center">{b.icon}</div>
              {b.label && <span className={`whitespace-nowrap ${b.w}`}>{b.label}</span>}
            </div>
          ))}
          <div className="flex-1" />
          <ChevronsRight size={26} className="text-[#e8eaed]" />
        </div>
        <div className="h-[2px] shrink-0 bg-[#606060]" />

        {/* page, dimmed behind the modal */}
        <div className="relative flex min-h-0 flex-1">
          <div className="relative min-w-0 flex-1 overflow-hidden bg-[#7f7f80]">
            <div className="h-[437px] overflow-hidden bg-[#818181] pl-[500px]">
              <div className="mt-[-51px] w-[1200px] text-[36px] leading-[55px] text-[#383b52]">
                <div className="leading-[62px]">pengetahuan dan</div>
                <div>menjunjung tinggi</div>
                <div>kemampuan dan</div>
                <div>dengan prestasi</div>
              </div>
              <div className="mt-[42px] flex h-[94px] w-[600px] items-center rounded-full bg-[#6b5620] pl-[71px] text-[30px] font-bold text-[#9b9b9b]">
                Pendaftaran
              </div>
            </div>

            <div className="absolute left-[2620px] top-[236px] h-[110px] w-[110px] rounded-full bg-[#6e5822]" />

            {/* modal */}
            <div className="absolute inset-0 flex justify-center pt-[1px]">
              <div className="flex h-[1780px] w-[2050px] flex-col rounded-t-[12px] bg-white">
                <div className="flex h-[115px] shrink-0 items-center justify-between border-b-2 border-[#e6e6ee] px-[30px] pb-[2px]">
                  <h2 className="font-['Lato',sans-serif] text-[40px] font-bold text-[#1f2036]">Pendaftaran Atlet</h2>
                  <X size={58} strokeWidth={1.2} className="mr-[-15px] text-[#6f6f7c]" />
                </div>
                <div className="h-[1470px] shrink-0 pl-[30px] pr-[31px] pt-[32px]">
                  <Label>Pilih Tim anda</Label>
                  <div className="relative mt-[5px] flex h-[86px] items-center rounded-[7px] border-2 border-[#8e8e8e] pl-[15px] pt-[2px] text-[24px] text-[#555555]">
                    -
                    <svg width="14" height="12" viewBox="0 0 14 12" className="absolute right-[12px] top-[17px]">
                      <path d="M0 0 H14 L7 12 Z" fill="#808080" />
                    </svg>
                  </div>
                  <div className="mt-[14px]">
                    <Athlete
                      title="Atlet 1"
                      kategoriClass="pl-[15px] pt-[4px] text-[23.5px] text-[#1a1b28]"
                      kelas="Kyorugi ICTU A"
                      nama="maman"
                      gender="PUTRA"
                      closeGap="mt-[44px]"
                    />
                  </div>
                  <div className="mt-[28px]">
                    <Athlete
                      title="Atlet 2"
                      kategoriClass="pl-[22px] pt-[10px] text-[27px] text-[#1a1b28]"
                      kelas="Master"
                      nama="duloh"
                      gender="PUTRI"
                      closeGap="mt-[29px]"
                      second
                    />
                  </div>
                </div>
                <div className="flex h-[160px] shrink-0 items-center justify-end border-t-2 border-[#e6e6ee] pr-[30px] text-[26.5px] font-bold">
                  <div className="flex h-[88px] w-[428px] items-center justify-center gap-[4px] rounded-full bg-[#cf4652] text-[24px] text-white">
                    Tambah Atlet/Peserta
                    <FaUserPlus size={28} className="text-white" />
                  </div>
                  <div className="ml-[16px] flex h-[100px] w-[277px] items-center justify-center rounded-full border-[3px] border-[#d3a637] bg-white text-[#d3a637]">
                    <ChevronLeft size={30} strokeWidth={3} />
                    Kembali
                  </div>
                  <div className="ml-[14px] flex h-[93px] w-[243px] items-center justify-center rounded-full bg-[#d3a637] text-white">
                    Simpan
                  </div>
                </div>
              </div>
            </div>
          </div>

          {/* page scrollbar */}
          <div className="w-[30px] shrink-0 border-x-2 border-[#f0f0f0] bg-[#fafafa] pl-[6px] pr-[4px] pt-[51px]">
            <div className="h-[1585px] rounded-full bg-[#c2c2c2]" />
          </div>

          <div className="pointer-events-none absolute inset-x-0 bottom-0 h-[60px] bg-gradient-to-b from-black/0 to-black/10" />

          <div className="absolute bottom-0 right-0 flex h-[65px] w-[65px] items-center justify-center rounded-bl-[10px] bg-white">
            <svg width="26" height="36" viewBox="0 0 20 36" preserveAspectRatio="none">
              <path d="M10 0 C12 8 20 12 19 24 C18 32 13 36 10 36 C5 35 1 31 1 24 C1 19 4 16 5 12 C7 14 8 16 8 18 C11 13 11 6 10 0 Z" fill="#d2542a" />
              <path d="M10 18 C11 22 15 25 13 30 C12 33 8 33 7 30 C6 26 9 23 10 18 Z" fill="#fff" />
            </svg>
          </div>
        </div>
      </div>

      {/* dock */}
      <div className="flex h-[110px] shrink-0 justify-center border-t-2 border-[#2d2d2d]">
        <div className="flex h-[97px] items-start gap-[20px] rounded-[22px] border-2 border-[#a0a0a0] bg-[#848484] pl-[12px] pr-[13px] pt-[13px]">
          {dockIcons.map(d => <DockIcon key={d.name} art={d.art} dot={d.dot} />)}
          <div className="ml-[8px] mr-[6px] mt-[-1px] h-[70px] w-[1px] bg-[#3f3f3f]" />
          <DockIcon
            art={
              <>
                <path d="M0 8 A5 5 0 0 1 5 3 H18 L24 9 H55 A5 5 0 0 1 60 14 V56 A4 4 0 0 1 56 60 H4 A4 4 0 0 1 0 56 Z" fill="#3f95de" />
                <path d="M0 14 H60 V56 A4 4 0 0 1 56 60 H4 A4 4 0 0 1 0 56 Z" fill="#7fc4f5" />
                <circle cx="30" cy="36" r="13" fill="#5ba6e2" />
                <path d="M30 28 V44 M25 39 L30 44 L35 39" fill="none" stroke="#8cc8f2" strokeWidth="2" />
              </>
            }
          />
          <DockIcon
            art={
              <>
                <path d="M3 6 H57 L52 62 H8 Z" fill="#dcdcdc" />
                <ellipse cx="30" cy="6" rx="27" ry="8" fill="#f2f2f2" stroke="#bcbcbc" />
                <path d="M14 4 L20 -3 L26 5 M30 4 L36 -4 L44 6" fill="none" stroke="#666" strokeWidth="3" />
                <path d="M18 20 V54 M30 20 V56 M42 20 V54" stroke="#e4e4e4" strokeWidth="2" />
              </>
            }
          />
        </div>
      </div>
    </div>
  );
}
